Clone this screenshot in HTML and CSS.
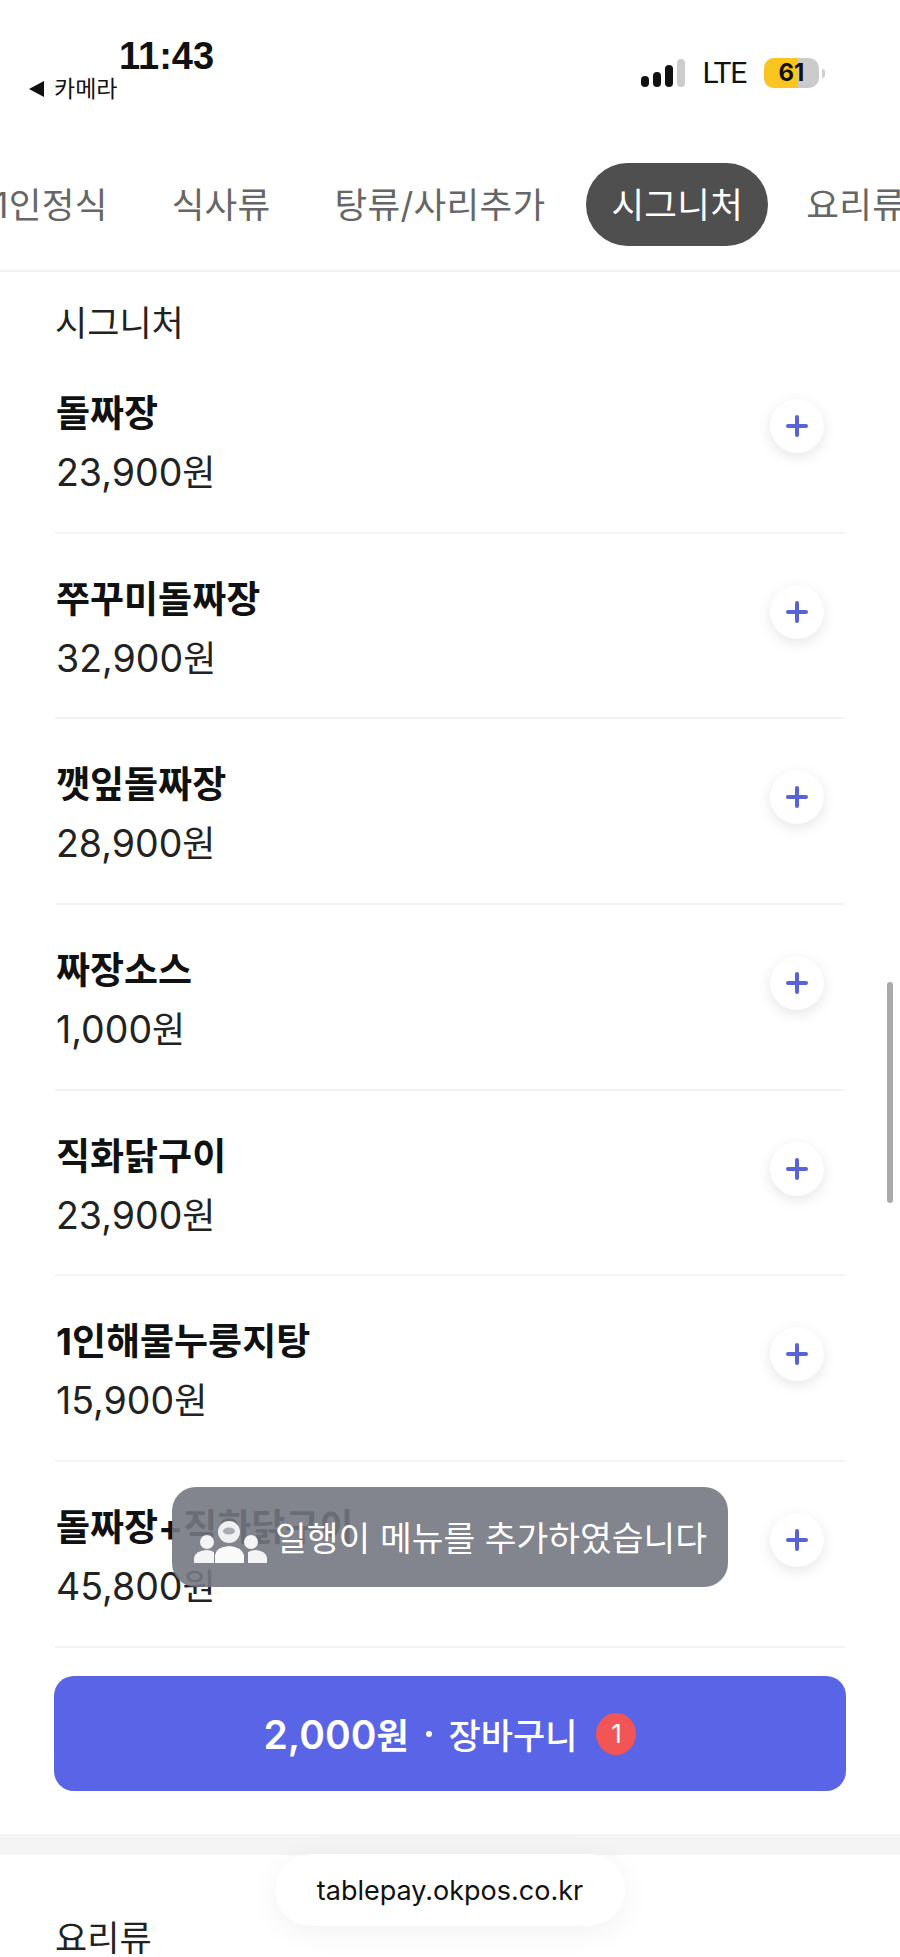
FILE: index.html
```html
<!DOCTYPE html>
<html lang="ko">
<head>
  <meta charset="UTF-8" />
  <title>tablepay</title>
  <link rel="stylesheet" href="styles.css">
</head>
<body>
  <div class="page">
    <div class="status-bar">
      <div class="status-left">
        <div class="time">11:43</div>
        <div class="back"><span class="back-arrow"></span>카메라</div>
      </div>
      <div class="status-right">
        <div class="signal">
          <span class="bar bar1"></span>
          <span class="bar bar2"></span>
          <span class="bar bar3"></span>
          <span class="bar bar4"></span>
        </div>
        <span class="lte">LTE</span>
        <div class="battery"><span class="battery-level"></span><span class="battery-num">61</span></div>
        <span class="battery-nub"></span>
      </div>
    </div>

    <nav class="tabs">
      <a class="tab">1인정식</a>
      <a class="tab">식사류</a>
      <a class="tab wide">탕류/사리추가</a>
      <a class="tab active">시그니처</a>
      <a class="tab">요리류</a>
    </nav>

    <section class="menu-section">
      <h2 class="section-title">시그니처</h2>
      <div class="menu-row">
        <div><div class="menu-name">돌짜장</div><div class="menu-price">23,900<span class="won">원</span></div></div>
        <button class="add-btn"><span class="plus"></span></button>
      </div>
      <div class="menu-row">
        <div><div class="menu-name">쭈꾸미돌짜장</div><div class="menu-price">32,900<span class="won">원</span></div></div>
        <button class="add-btn"><span class="plus"></span></button>
      </div>
      <div class="menu-row">
        <div><div class="menu-name">깻잎돌짜장</div><div class="menu-price">28,900<span class="won">원</span></div></div>
        <button class="add-btn"><span class="plus"></span></button>
      </div>
      <div class="menu-row">
        <div><div class="menu-name">짜장소스</div><div class="menu-price">1,000<span class="won">원</span></div></div>
        <button class="add-btn"><span class="plus"></span></button>
      </div>
      <div class="menu-row">
        <div><div class="menu-name">직화닭구이</div><div class="menu-price">23,900<span class="won">원</span></div></div>
        <button class="add-btn"><span class="plus"></span></button>
      </div>
      <div class="menu-row">
        <div><div class="menu-name">1인해물누룽지탕</div><div class="menu-price">15,900<span class="won">원</span></div></div>
        <button class="add-btn"><span class="plus"></span></button>
      </div>
      <div class="menu-row">
        <div><div class="menu-name">돌짜장+직화닭구이</div><div class="menu-price">45,800<span class="won">원</span></div></div>
        <button class="add-btn"><span class="plus"></span></button>
      </div>
      <div class="menu-row last"></div>
    </section>

    <section class="menu-section next">
      <h2 class="section-title">요리류</h2>
    </section>

    <div class="scrollbar"></div>

    <div class="toast">
      <svg class="toast-icon" viewBox="0 0 73 44" width="73" height="44">
        <circle cx="13" cy="22" r="7" fill="#f4f4f6"/>
        <circle cx="57" cy="22" r="7" fill="#f4f4f6"/>
        <path d="M0 43 V38 Q1 31 12 30 Q17 30 20 32 V43 Z" fill="#f4f4f6"/>
        <path d="M54 32 Q58 30 62 30 Q72 31 73 38 V43 H54 Z" fill="#f4f4f6"/>
        <circle cx="35" cy="12" r="11" fill="#f0f0f2"/>
        <ellipse cx="35" cy="11" rx="6" ry="3.5" fill="#a9abb3"/>
        <path d="M21 43 V35 Q22 27 35 26 Q48 27 50 35 V43 Z" fill="#fafafa"/>
      </svg>
      <span class="toast-text">일행이 메뉴를 추가하였습니다</span>
    </div>

    <button class="cart">
      <span class="cart-price">2,000<span class="cart-won">원</span></span>
      <span class="cart-dot"></span>
      <span class="cart-label">장바구니</span>
      <span class="cart-badge">1</span>
    </button>

    <div class="url-pill">tablepay.okpos.co.kr</div>
  </div>
</body>
</html>
```

FILE: styles.css
```css
* {
  box-sizing: border-box;
  margin: 0;
  padding: 0;
  font-family: 'Inter', 'Noto Sans CJK KR', sans-serif;
}
body {
  background: white;
}
.page {
  position: relative;
  width: 900px;
  height: 1957px;
  overflow: hidden;
  background: white;
  color: #111;
}

/* status bar */
.status-bar {
  display: flex;
  justify-content: space-between;
  height: 163px;
  padding: 36px 75px 0 29px;
}
.time {
  margin-left: 90px;
  font-family: 'Liberation Sans', sans-serif;
  font-size: 38px;
  font-weight: 700;
  line-height: 40px;
  color: #111;
}
.back {
  display: flex;
  align-items: center;
  gap: 10px;
  font-size: 23px;
  line-height: 26px;
}
.back-arrow {
  width: 0;
  height: 0;
  border-top: 8px solid transparent;
  border-bottom: 8px solid transparent;
  border-right: 15px solid #111;
}
.status-right {
  display: flex;
  align-items: center;
  height: 30px;
  margin-top: 22px;
}
.signal {
  display: flex;
  align-items: flex-end;
  gap: 4px;
  height: 28px;
  margin-right: 18px;
}
.bar {
  width: 8px;
  border-radius: 4px;
  background: #111;
}
.bar1 { height: 11px; }
.bar2 { height: 15px; }
.bar3 { height: 22px; }
.bar4 { height: 28px; background: #ccc; }
.lte {
  font-family: 'Roboto', sans-serif;
  font-size: 30px;
  line-height: 30px;
  letter-spacing: -1.2px;
  margin-right: 18px;
}
.battery {
  position: relative;
  display: flex;
  align-items: center;
  justify-content: center;
  width: 55px;
  height: 30px;
  border-radius: 10px;
  background: #cbcbcb;
  overflow: hidden;
}
.battery-level {
  position: absolute;
  left: 0;
  top: 0;
  bottom: 0;
  width: 34px;
  background: #fbc51f;
}
.battery-num {
  position: relative;
  font-size: 24px;
  font-weight: 700;
  line-height: 30px;
}
.battery-nub {
  width: 3px;
  height: 9px;
  margin-left: 3px;
  border-radius: 0 3px 3px 0;
  background: #cfcfcf;
}

/* tabs */
.tabs {
  display: flex;
  align-items: center;
  gap: 12px;
  height: 109px;
  padding-bottom: 24px;
  margin-left: -32px;
  border-bottom: 2px solid #f1f1f1;
  width: 932px;
  overflow: hidden;
  flex-wrap: nowrap;
}
.tab {
  flex: none;
  height: 83px;
  padding: 0 26px;
  border-radius: 42px;
  font-size: 35.5px;
  letter-spacing: 0.3px;
  line-height: 86px;
  color: #666;
  white-space: nowrap;
}
.tab.wide {
  margin-right: 3px;
}
.tab.active {
  padding: 0 25px;
  background: #4f4f4f;
  color: white;
}

/* menu */
.menu-section {
  padding: 0 55px;
}
.menu-section.next {
  border-top: 21px solid #f4f4f4;
}
.section-title {
  height: 76px;
  padding-top: 27px;
  font-size: 35px;
  font-weight: 400;
  line-height: 48px;
  color: #222;
}
.menu-section.next .section-title {
  padding-top: 59px;
  height: 104px;
}
.menu-row {
  display: flex;
  justify-content: space-between;
  height: 185.7px;
  padding: 42px 21px 0 1px;
  border-bottom: 2px solid #f3f3f3;
}
.menu-row.last {
  border-bottom: none;
}
.menu-name {
  font-size: 37px;
  font-weight: 700;
  line-height: 48px;
  color: #111;
}
.menu-price {
  margin-top: 11px;
  font-size: 37.5px;
  line-height: 48px;
  color: #222;
}
.won {
  font-size: 36px;
}
.add-btn {
  display: flex;
  align-items: center;
  justify-content: center;
  width: 54px;
  height: 54px;
  margin-top: 9px;
  border: none;
  border-radius: 50%;
  background: white;
  box-shadow: 0 4px 14px rgba(0, 0, 0, 0.1);
}
.plus {
  position: relative;
  width: 22px;
  height: 22px;
}
.plus::before,
.plus::after {
  content: '';
  position: absolute;
  background: #5a62d8;
  border-radius: 2px;
}
.plus::before {
  left: 0;
  right: 0;
  top: 9px;
  height: 4px;
}
.plus::after {
  top: 0;
  bottom: 0;
  left: 9px;
  width: 4px;
}

.scrollbar {
  position: absolute;
  left: 887px;
  top: 982px;
  width: 6px;
  height: 221px;
  border-radius: 3px;
  background: #aaa;
}

/* overlays */
.toast {
  position: absolute;
  left: 172px;
  top: 1487px;
  display: flex;
  align-items: center;
  gap: 8px;
  width: 556px;
  height: 100px;
  padding: 0 22px;
  border-radius: 24px;
  background: rgba(116, 119, 130, 0.9);
  color: white;
  white-space: nowrap;
}
.toast-icon {
  flex: none;
  margin-top: 10px;
}
.toast-text {
  margin-top: 3px;
  font-size: 34.5px;
  line-height: 48px;
}
.cart {
  position: absolute;
  left: 54px;
  top: 1676px;
  display: flex;
  align-items: center;
  justify-content: center;
  width: 792px;
  height: 115px;
  border: none;
  border-radius: 20px;
  background: #5a64e6;
  color: white;
}
.cart span {
  white-space: nowrap;
}
.cart-price {
  font-size: 39px;
  font-weight: 600;
}
.cart-won {
  font-size: 35px;
}
.cart-dot {
  width: 6px;
  height: 6px;
  margin: 0 17px;
  border-radius: 50%;
  background: white;
}
.cart-label {
  font-size: 35px;
  font-weight: 500;
}
.cart-badge {
  display: flex;
  align-items: center;
  justify-content: center;
  width: 40px;
  height: 42px;
  margin-left: 19px;
  border-radius: 50%;
  background: #f25555;
  font-size: 26px;
}
.url-pill {
  position: absolute;
  left: 275px;
  top: 1854px;
  width: 350px;
  height: 72px;
  border-radius: 36px;
  background: white;
  box-shadow: 0 6px 30px rgba(0, 0, 0, 0.06);
  font-size: 27px;
  line-height: 74px;
  text-align: center;
  color: #111;
}
```
